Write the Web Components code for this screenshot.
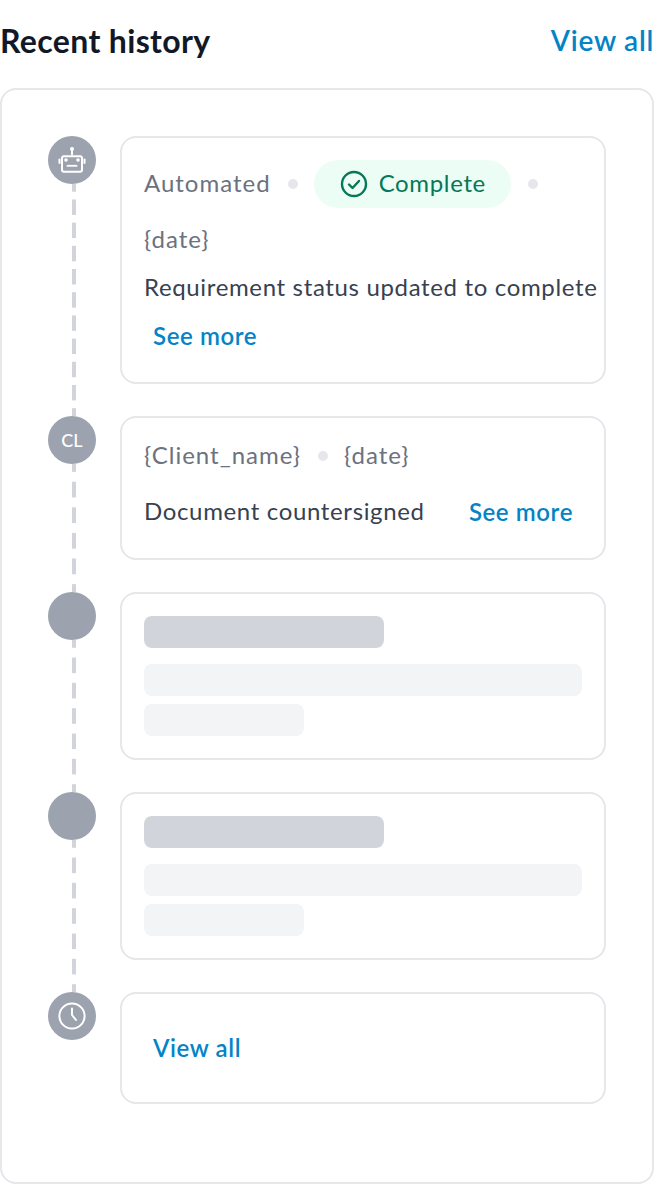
<!doctype html>
<html>
<head>
<meta charset="utf-8">
<style>
  html, body { margin: 0; background: #fff; }
  body { font-family: "Lato", "Liberation Sans", sans-serif; }
</style>
</head>
<body>
<recent-history>
  <history-item>
    <svg slot="icon" width="32" height="32" viewBox="0 0 32 32" fill="none">
      <circle cx="16" cy="5" r="2" fill="#fff"/>
      <path d="M16 6v5" stroke="#fff" stroke-width="2"/>
      <rect x="6" y="12.3" width="20" height="15.4" rx="2" stroke="#fff" stroke-width="2"/>
      <rect x="2.5" y="14.5" width="2" height="5.5" rx="1" fill="#fff"/>
      <rect x="27.5" y="14.5" width="2" height="5.5" rx="1" fill="#fff"/>
      <circle cx="10" cy="16" r="1.8" fill="#fff"/>
      <circle cx="22" cy="16" r="1.8" fill="#fff"/>
      <path d="M10.7 21.8h10.6" stroke="#fff" stroke-width="1.8"/>
    </svg>
    <history-meta>
      <span>Automated</span><meta-dot></meta-dot>
      <status-chip>Complete</status-chip><meta-dot></meta-dot>
      <span>{date}</span>
    </history-meta>
    <history-message wrap>Requirement status updated to complete</history-message>
  </history-item>
  <history-item>
    <span slot="icon" style="color:#fff;font-size:18px;font-weight:500">CL</span>
    <history-meta>
      <span>{Client_name}</span><meta-dot></meta-dot><span>{date}</span>
    </history-meta>
    <history-message>Document countersigned</history-message>
  </history-item>
  <history-item><history-skeleton></history-skeleton></history-item>
  <history-item><history-skeleton></history-skeleton></history-item>
  <history-item last>
    <svg slot="icon" width="32" height="32" viewBox="0 0 32 32" fill="none" stroke="#fff" stroke-width="2" stroke-linecap="round" stroke-linejoin="round">
      <circle cx="16" cy="16" r="12.6"/>
      <path d="M16 8.5V15l4 5"/>
    </svg>
    <text-link style="margin:8px 0">View all</text-link>
  </history-item>
</recent-history>

<script>
  class TextLink extends HTMLElement {
    constructor() {
      super();
      this.attachShadow({ mode: 'open' });
      this.shadowRoot.innerHTML = `
        <style>
          :host { display: inline-flex; align-items: center; height: 48px; padding: 0 9px; box-sizing: border-box;
            color: #0284c7; font-size: 24px; font-weight: 600; letter-spacing: .6px; cursor: pointer; white-space: nowrap; }
          slot { display: block; padding-bottom: 2px; }
        </style>
        <slot></slot>`;
    }
  }

  class MetaDot extends HTMLElement {
    constructor() {
      super();
      this.attachShadow({ mode: 'open' });
      this.shadowRoot.innerHTML = `
        <style>
          :host { display: block; width: 10px; height: 10px; margin-left: 1px; border-radius: 50%; background: #e5e7eb; }
        </style>`;
    }
  }

  class StatusChip extends HTMLElement {
    constructor() {
      super();
      this.attachShadow({ mode: 'open' });
      this.shadowRoot.innerHTML = `
        <style>
          :host { display: inline-flex; align-items: center; gap: 11px; height: 48px; padding: 0 25px 0 26px;
            box-sizing: border-box; border-radius: 24px; background: #ecfdf5; color: #047857; letter-spacing: .65px; }
          slot { display: block; line-height: 30px; padding-bottom: 2px; }
        </style>
        <svg width="28" height="28" viewBox="0 0 28 28" fill="none" stroke="#047857" stroke-width="2.4" stroke-linecap="round" stroke-linejoin="round">
          <circle cx="14" cy="14" r="12"/>
          <path d="M9 14.5l3.5 3.5 6.5-7"/>
        </svg>
        <slot></slot>`;
    }
  }

  class HistoryMeta extends HTMLElement {
    constructor() {
      super();
      this.attachShadow({ mode: 'open' });
      this.shadowRoot.innerHTML = `
        <style>
          :host { display: flex; flex-wrap: wrap; align-items: center; gap: 16px; min-height: 32px;
            color: #6b7280; font-size: 24px; letter-spacing: 1px; }
          ::slotted(span) { line-height: 30px; padding-bottom: 2px; }
        </style>
        <slot></slot>`;
    }
  }

  class HistoryMessage extends HTMLElement {
    constructor() {
      super();
      this.attachShadow({ mode: 'open' });
      this.shadowRoot.innerHTML = `
        <style>
          :host { display: flex; flex-wrap: wrap; align-items: center; justify-content: space-between;
            margin-top: 16px; color: #374151; font-size: 24px; letter-spacing: .65px; }
          :host([wrap]) { row-gap: 8px; }
          :host([wrap]) .text { width: 100%; }
          .text { white-space: nowrap; line-height: 30px; padding-bottom: 2px; }
        </style>
        <span class="text"><slot></slot></span>
        <text-link>See more</text-link>`;
    }
  }

  class HistorySkeleton extends HTMLElement {
    constructor() {
      super();
      this.attachShadow({ mode: 'open' });
      this.shadowRoot.innerHTML = `
        <style>
          :host { display: flex; flex-direction: column; }
          div { height: 32px; border-radius: 8px; background: #f3f4f6; }
          .title { width: 240px; background: #d1d5db; margin-bottom: 16px; }
          .line { width: 100%; margin-bottom: 8px; }
          .short { width: 160px; }
        </style>
        <div class="title"></div>
        <div class="line"></div>
        <div class="short"></div>`;
    }
  }

  class HistoryItem extends HTMLElement {
    constructor() {
      super();
      this.attachShadow({ mode: 'open' });
      this.shadowRoot.innerHTML = `
        <style>
          :host { display: grid; grid-template-columns: 48px 486px; column-gap: 24px; }
          .rail { display: flex; flex-direction: column; }
          .avatar { width: 48px; height: 48px; flex: none; border-radius: 50%; background: #9ca3af;
            display: flex; align-items: center; justify-content: center; }
          /* half dash at each end, round makes the tiles fit the height */
          .line { flex: 1; width: 4px; margin-left: 24px;
            background: linear-gradient(to bottom, #d1d5db 8px, transparent 8px, transparent calc(100% - 8px), #d1d5db calc(100% - 8px));
            background-size: 4px 24px; background-repeat: round; }
          .body { padding-bottom: 32px; }
          .card { box-sizing: border-box; border: 2px solid #e5e7eb; border-radius: 16px; padding: 22px; }
          :host([last]) .line { display: none; }
          :host([last]) .body { padding-bottom: 0; }
        </style>
        <div class="rail">
          <div class="avatar"><slot name="icon"></slot></div>
          <div class="line"></div>
        </div>
        <div class="body"><div class="card"><slot></slot></div></div>`;
    }
  }

  class RecentHistory extends HTMLElement {
    constructor() {
      super();
      this.attachShadow({ mode: 'open' });
      this.shadowRoot.innerHTML = `
        <style>
          :host { display: block; }
          header { display: flex; align-items: center; justify-content: space-between; height: 88px; padding-bottom: 8px; box-sizing: border-box; }
          h2 { margin: 0; color: #111827; font-size: 32px; font-weight: 700; letter-spacing: .35px; }
          a { color: #0284c7; font-size: 28px; font-weight: 600; letter-spacing: .75px; }
          .panel { box-sizing: border-box; height: 1096px; border: 2px solid #e5e7eb; border-radius: 16px; padding: 46px 46px 0; }
        </style>
        <header><h2>Recent history</h2><a>View all</a></header>
        <div class="panel"><slot></slot></div>`;
    }
  }

  customElements.define('text-link', TextLink);
  customElements.define('meta-dot', MetaDot);
  customElements.define('status-chip', StatusChip);
  customElements.define('history-meta', HistoryMeta);
  customElements.define('history-message', HistoryMessage);
  customElements.define('history-skeleton', HistorySkeleton);
  customElements.define('history-item', HistoryItem);
  customElements.define('recent-history', RecentHistory);
</script>
</body>
</html>
